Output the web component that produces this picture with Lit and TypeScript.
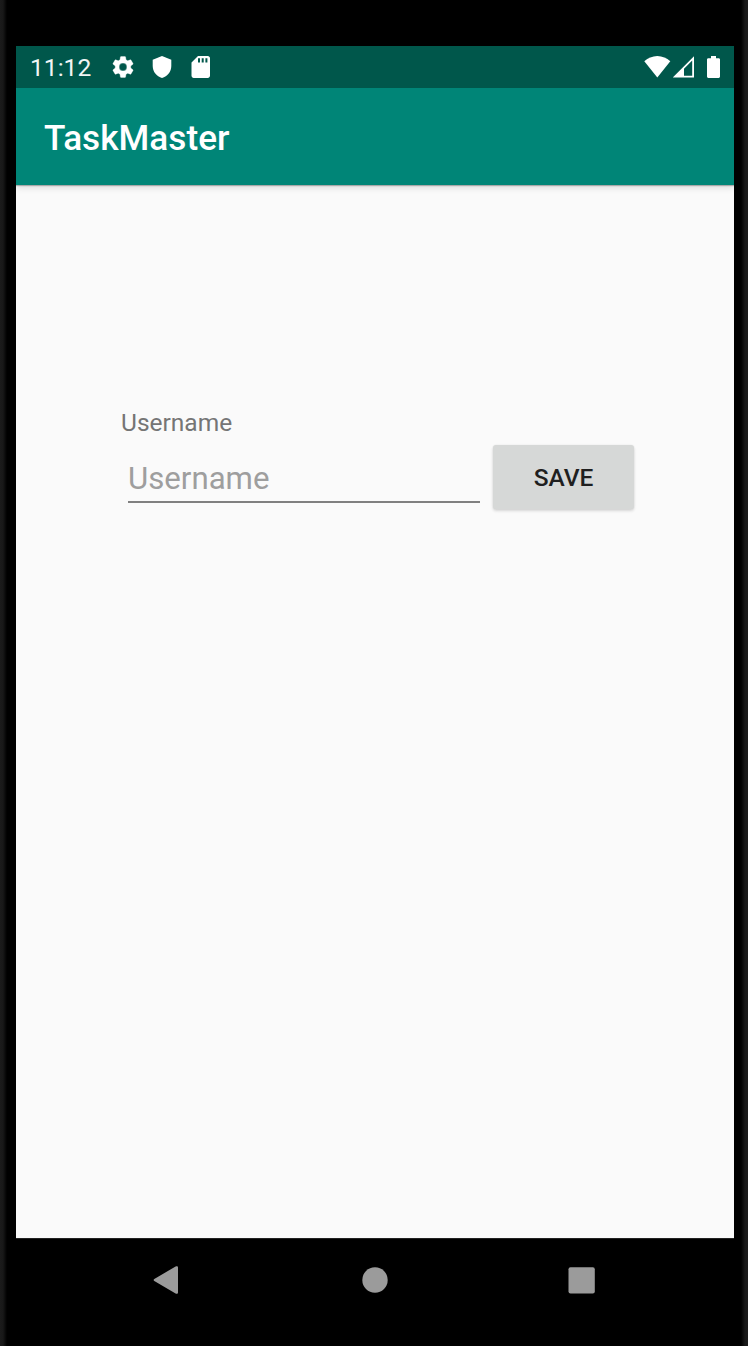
import { LitElement, html, css } from "lit";
import { customElement } from "lit/decorators.js";

@customElement("status-bar")
class StatusBar extends LitElement {
  static styles = css`
    :host { display: flex; align-items: center; height: 42px; background: #00574b; color: #fff; }
    .time { width: 62px; margin-left: 14px; font-size: 24.600px; line-height: 42px; padding-top: 1px; height: 41px; white-space: nowrap; opacity: .94; }
    svg { display: block; flex: none; fill: #fff; }
    .gear { margin-left: 18px; stroke: #fff; stroke-width: .3; }
    .shield { margin-left: 13.500px; }
    .card { margin-left: 17px; }
    .wifi { margin-left: auto; }
    .signal { margin-left: 1.500px; }
    .battery { margin-left: 12.500px; margin-right: 14px; }
  `;
  render() {
    return html`
      <span class="time">11:12</span>
      <svg class="gear" width="26" height="26" viewBox="0 0 24 24"><path d="M19.14 12.94c.04-.3.06-.61.06-.94 0-.32-.02-.64-.07-.94l2.03-1.58a.49.49 0 0 0 .12-.61l-1.92-3.32a.49.49 0 0 0-.59-.22l-2.39.96a7 7 0 0 0-1.62-.94l-.36-2.54a.48.48 0 0 0-.48-.41h-3.84a.47.47 0 0 0-.47.41l-.36 2.54c-.59.24-1.13.57-1.62.94l-2.39-.96a.48.48 0 0 0-.59.22L2.74 8.87a.47.47 0 0 0 .12.61l2.03 1.58c-.05.3-.09.63-.09.94s.02.64.07.94l-2.03 1.58a.49.49 0 0 0-.12.61l1.92 3.32c.12.22.37.29.59.22l2.39-.96c.5.38 1.03.7 1.62.94l.36 2.54c.05.24.24.41.48.41h3.84c.24 0 .44-.17.47-.41l.36-2.54a7 7 0 0 0 1.62-.94l2.39.96c.22.08.47 0 .59-.22l1.92-3.32a.47.47 0 0 0-.12-.61zM12 15.6a3.6 3.6 0 1 1 0-7.2 3.6 3.6 0 0 1 0 7.2z"/></svg>
      <svg class="shield" width="24" height="24" viewBox="0 0 24 24"><path d="M12 1 2.700 4.800v6.200c0 5.550 3.900 10.740 9.300 12 5.400-1.260 9.300-6.450 9.300-12V4.800z"/></svg>
      <svg class="card" width="19" height="22" viewBox="0 0 19 22"><path d="M16.8 0H7L.5 6.6v13.2c0 1.2 1 2.2 2.2 2.2h14.1c1.2 0 2.200-1 2.200-2.200V2.200C19 1 18 0 16.800 0zM9 6.600H7V2.200h2zm3.700 0h-2V2.200h2zm3.700 0h-2V2.200h2z"/></svg>
      <svg class="wifi" width="27" height="24" viewBox="0 0 27 24"><path d="M13.3 22.500 .3 6.200C4 3.100 8.300 1 13.300 1s9.400 2.100 13 5.200z"/></svg>
      <svg class="signal" width="22" height="24" viewBox="0 0 22 24"><path fill-rule="evenodd" d="M-.2 22.500 21 1.200V22.500zM11 20.700h8.200V5.500L11 13.700z"/></svg>
      <svg class="battery" width="13" height="24" viewBox="0 0 13 24"><path d="M11.700 3.300H9V1H4v2.300H1.300C.6 3.300 0 3.900 0 4.600v17c0 .7.600 1.300 1.300 1.300h10.400c.7 0 1.300-.6 1.300-1.300v-17c0-.7-.6-1.300-1.300-1.300z"/></svg>
    `;
  }
}

@customElement("username-form")
class UsernameForm extends LitElement {
  static styles = css`
    :host { display: block; padding: 222px 100px 0 105px; }
    .label { display: block; height: 32px; line-height: 32px; font-size: 24.500px; color: #757575; }
    .row { display: flex; align-items: flex-start; padding: 6px 0 0 7px; }
    .field { box-sizing: border-box; width: 352px; height: 58px; margin: 0; padding: 10px 0 0; border: 0; border-bottom: 2px solid #808080; border-radius: 0; outline: 0; background: none; font: 400 31.200px Roboto, sans-serif; color: #212121; }
    .field::placeholder { color: #9e9e9e; opacity: 1; }
    .save { width: 141px; height: 64px; margin: 0 0 0 13px; padding: 0; border: 0; border-radius: 3px; background: #d6d8d7; color: #1f1f1f; font: 500 24.500px Roboto, sans-serif; box-shadow: 0 2px 3px rgba(0,0,0,.14), 0 0 2px rgba(0,0,0,.08); }
  `;
  render() {
    return html`
      <label class="label" for="name">Username</label>
      <div class="row">
        <input class="field" id="name" placeholder="Username">
        <button class="save">SAVE</button>
      </div>
    `;
  }
}

@customElement("nav-bar")
class NavBar extends LitElement {
  static styles = css`
    :host { display: flex; align-items: center; justify-content: space-between; box-sizing: border-box; height: 83px; padding: 0 139px 0 137px; border-top: 1px solid #222; background: #000; }
    svg { display: block; fill: #9b9b9b; }
  `;
  render() {
    return html`
      <svg width="27" height="28" viewBox="0 0 27 28"><path d="M1.300 12.900 22.600.5c1.200-.7 2.400-.3 2.400.9v25.200c0 1.200-1.200 1.600-2.400.9L1.300 15.100c-.9-.6-.9-1.600 0-2.200z"/></svg>
      <svg width="28" height="26" viewBox="0 0 28 26"><circle cx="15" cy="13" r="12.700"/></svg>
      <svg width="27" height="27" viewBox="0 0 27 27"><rect x=".5" y=".2" width="26.300" height="26.300" rx="2"/></svg>
    `;
  }
}

@customElement("app-root")
class AppRoot extends LitElement {
  static styles = css`
    :host { display: block; box-sizing: border-box; width: 748px; height: 1346px; padding: 46px 14px 0 16px; overflow: hidden; font-family: Roboto, sans-serif; background: linear-gradient(90deg, #1b1b1b 0, #181818 3px, #000 7px, #000 741px, #181818 745px, #1b1b1b 748px); }
    .screen { display: flex; flex-direction: column; height: 1192px; background: #fafafa; }
    .toolbar { flex: none; height: 97px; padding: 2px 0 0 28px; box-sizing: border-box; line-height: 97px; background: #008577; color: #fff; font-size: 35.200px; font-weight: 500; box-shadow: 0 1px 1px rgba(0,0,0,.25), 0 3px 6px rgba(0,0,0,.12); clip-path: inset(0 0 -14px 0); }
  `;
  render() {
    return html`
      <main class="screen">
        <status-bar></status-bar>
        <header class="toolbar">TaskMaster</header>
        <username-form></username-form>
      </main>
      <nav-bar></nav-bar>
    `;
  }
}
